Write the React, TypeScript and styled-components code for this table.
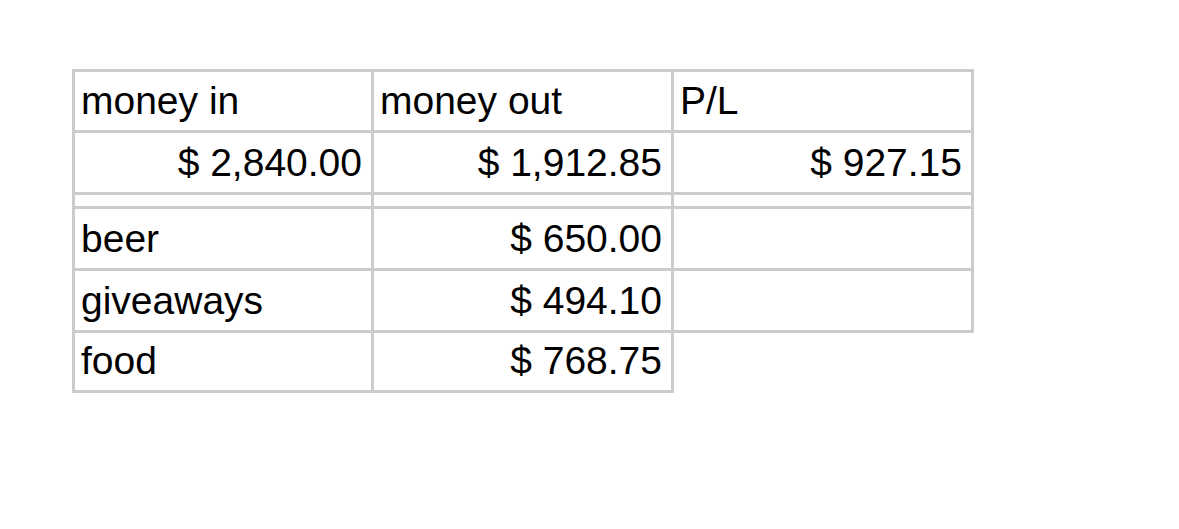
import React from "react";
import styled, { createGlobalStyle } from "styled-components";

const GlobalStyle = createGlobalStyle`
  html, body {
    margin: 0;
    padding: 0;
    background: #ffffff;
  }
  body {
    font-family: "Liberation Sans", Arial, sans-serif;
    color: #000000;
  }
`;

const Page = styled.div`
  padding: 69px 0 0 72px;
  width: 1179px;
  height: 529px;
  box-sizing: border-box;
`;

const Sheet = styled.div`
  display: grid;
  grid-template-columns: 299px 300px 300px;
  grid-template-rows: 61px 62px 14px 62px 62px 60px;
  width: max-content;
  border-top: 3px solid #cccccc;
  border-left: 3px solid #cccccc;
`;

const Cell = styled.div<{ $align?: "left" | "right" }>`
  box-sizing: border-box;
  border-right: 3px solid #cccccc;
  border-bottom: 3px solid #cccccc;
  display: flex;
  align-items: flex-end;
  justify-content: ${(p) => (p.$align === "right" ? "flex-end" : "flex-start")};
  padding: 0 9px 6px 6px;
  font-size: 39px;
  line-height: 1.15;
  white-space: nowrap;
  overflow: hidden;
`;

const SpacerCell = styled.div`
  box-sizing: border-box;
  border-right: 3px solid #cccccc;
  border-bottom: 3px solid #cccccc;
`;

type Row = { cells: { text: string; align?: "left" | "right" }[] };

const rows: Row[] = [
  { cells: [{ text: "money in" }, { text: "money out" }, { text: "P/L" }] },
  {
    cells: [
      { text: "$ 2,840.00", align: "right" },
      { text: "$ 1,912.85", align: "right" },
      { text: "$ 927.15", align: "right" },
    ],
  },
];

const detail: Row[] = [
  { cells: [{ text: "beer" }, { text: "$ 650.00", align: "right" }, { text: "" }] },
  { cells: [{ text: "giveaways" }, { text: "$ 494.10", align: "right" }, { text: "" }] },
  { cells: [{ text: "food" }, { text: "$ 768.75", align: "right" }] },
];

export default function App() {
  return (
    <>
      <GlobalStyle />
      <Page>
        <Sheet>
          {rows.map((r, i) =>
            r.cells.map((c, j) => (
              <Cell key={`h${i}-${j}`} $align={c.align}>
                {c.text}
              </Cell>
            ))
          )}
          <SpacerCell />
          <SpacerCell />
          <SpacerCell />
          {detail.map((r, i) =>
            r.cells.map((c, j) => (
              <Cell key={`d${i}-${j}`} $align={c.align}>
                {c.text}
              </Cell>
            ))
          )}
        </Sheet>
      </Page>
    </>
  );
}
